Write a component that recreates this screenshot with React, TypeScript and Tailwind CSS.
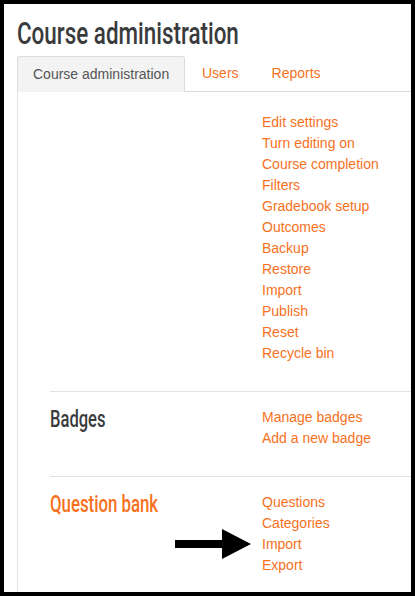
import React from "react"

const heading = {
  fontFamily: 'Roboto, "Liberation Sans", sans-serif',
}

const generalLinks = [
  "Edit settings",
  "Turn editing on",
  "Course completion",
  "Filters",
  "Gradebook setup",
  "Outcomes",
  "Backup",
  "Restore",
  "Import",
  "Publish",
  "Reset",
  "Recycle bin",
]

function LinkList({ items }: { items: string[] }) {
  return (
    <ul className="flex flex-col">
      {items.map((item) => (
        <li key={item} className="text-[14px] leading-[21px] text-[#f7711d]">
          {item}
        </li>
      ))}
    </ul>
  )
}

function Arrow() {
  return (
    <svg width="76" height="30" viewBox="0 0 76 30" className="block">
      <path d="M0 11 H47 V0 L76 15 L47 30 V19 H0 Z" fill="#000" />
    </svg>
  )
}

export default function App() {
  return (
    <div className="w-[415px] h-[596px] bg-black p-[4px] font-['Liberation_Sans',Arial,sans-serif]">
      <div className="h-full bg-white pl-[13px] pt-[9px] overflow-hidden flex flex-col">
        <h1
          style={heading}
          className="text-[32px] leading-[40px] text-[#3a3b3d] font-medium scale-x-[0.70] origin-left whitespace-nowrap"
        >
          Course administration
        </h1>

        <div className="mt-[3px] flex items-end">
          <div className="h-[36px] w-[168px] border border-b-0 border-[#dcdcdc] rounded-t-[3px] bg-[#f3f3f3] flex items-center pl-[15px] text-[14px] text-[#555]">
            Course administration
          </div>
          <div className="flex-1 h-[36px] border-b border-[#dcdcdc] flex items-center text-[14px] text-[#f7711d]">
            <span className="ml-[17px]">Users</span>
            <span className="ml-[33px]">Reports</span>
          </div>
        </div>

        <div className="flex-1 border-l border-[#e4e4e4] pl-[32px]">
          <section className="flex pt-[20px] pb-[27px]">
            <div className="w-[212px]" />
            <LinkList items={generalLinks} />
          </section>

          <section className="flex border-t border-[#e2e2e2] pt-[15px] pb-[27px]">
            <h3 style={heading} className="w-[212px] text-[24px] leading-[24px] font-medium text-[#3a3b3d] scale-x-[0.69] origin-left whitespace-nowrap">
              Badges
            </h3>
            <LinkList items={["Manage badges", "Add a new badge"]} />
          </section>

          <section className="flex border-t border-[#e2e2e2] pt-[15px]">
            <div className="w-[212px] flex flex-col">
              <h3 style={heading} className="text-[24px] leading-[24px] font-medium text-[#f7711d] scale-x-[0.70] origin-left whitespace-nowrap">
                Question bank
              </h3>
              <div className="mt-[13px] ml-[125px]">
                <Arrow />
              </div>
            </div>
            <LinkList items={["Questions", "Categories", "Import", "Export"]} />
          </section>
        </div>
      </div>
    </div>
  )
}
